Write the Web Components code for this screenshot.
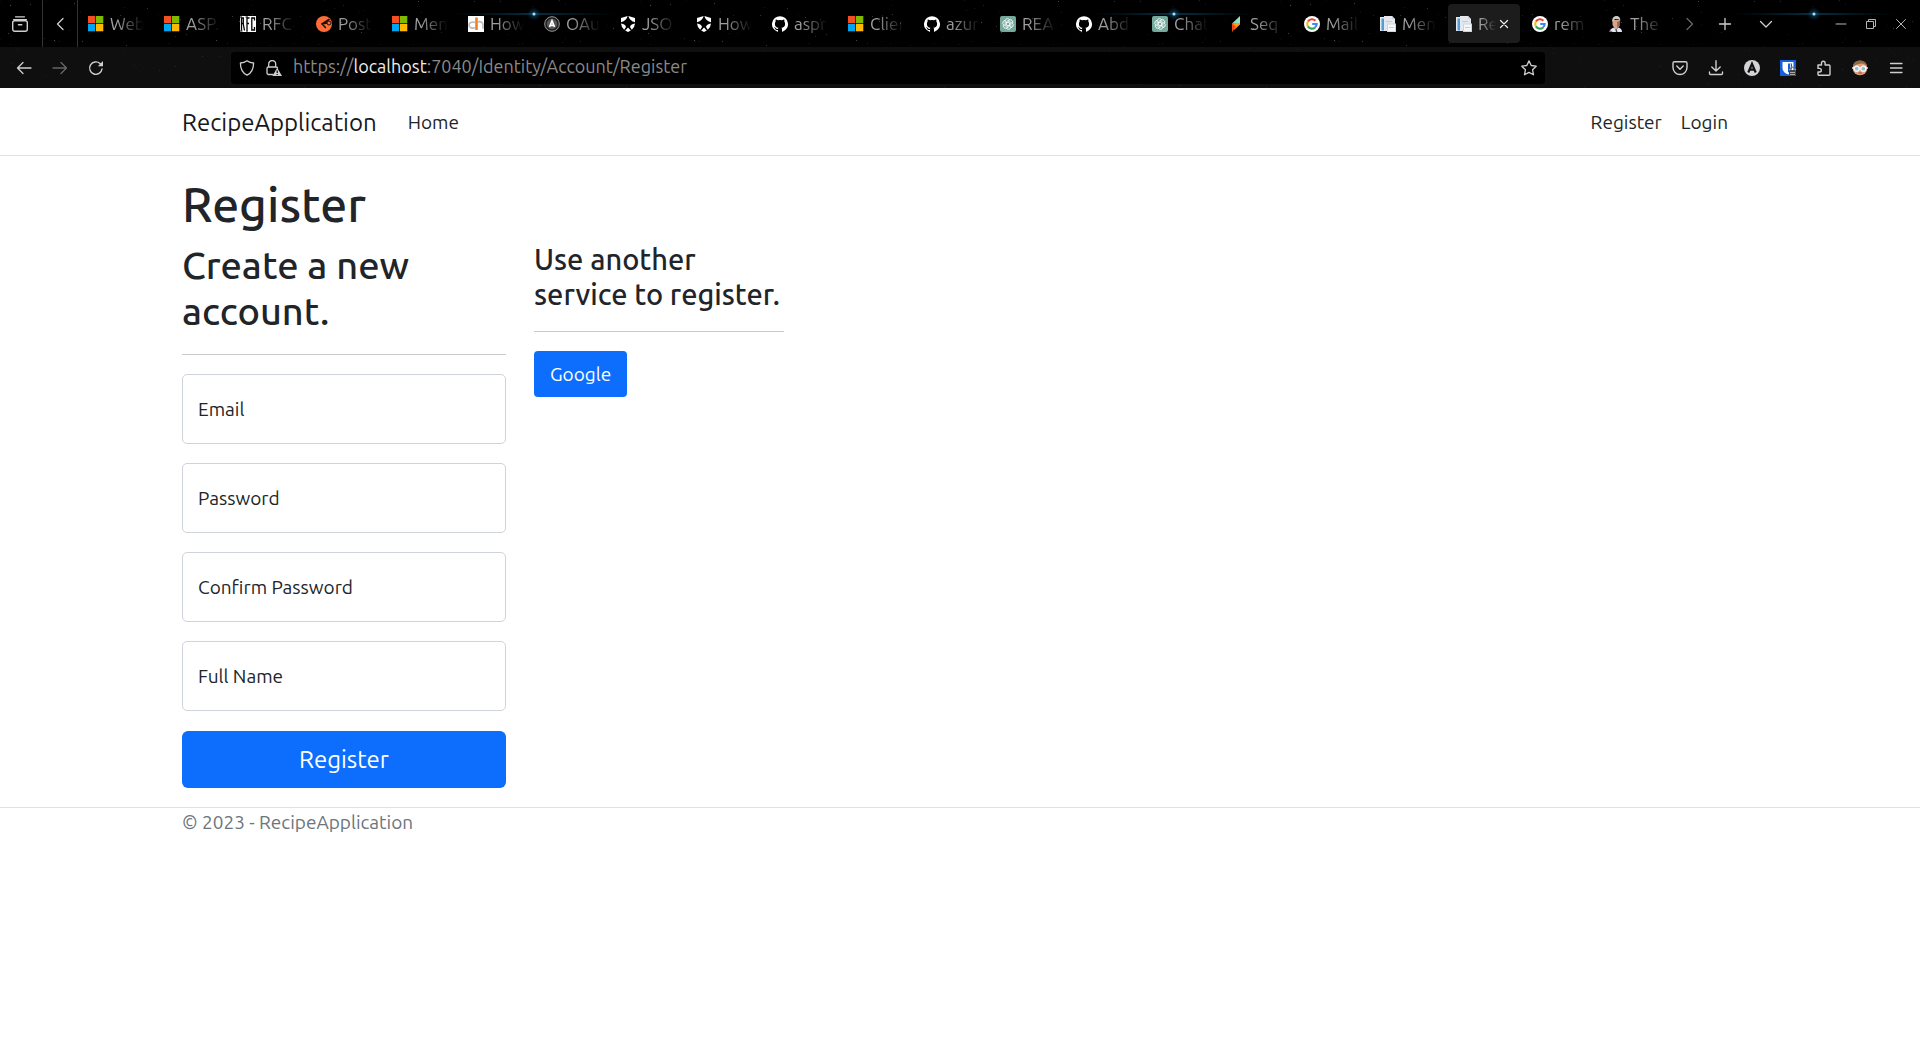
<!DOCTYPE html>
<html lang="en">
<head>
<meta charset="utf-8">
<title>Register - RecipeApplication</title>
<style>
  html, body { margin: 0; min-height: 100%; }
  body { background: #fff; color: #212529; font: 400 19px/29px Ubuntu, "Noto Sans", sans-serif; }
</style>
</head>
<body>
<browser-chrome></browser-chrome>
<site-header></site-header>
<register-page></register-page>
<site-footer>© 2023 - RecipeApplication</site-footer>

<script>
const define = (name, html, setup) => customElements.define(name, class extends HTMLElement {
  connectedCallback() {
    if (this.shadowRoot) return;
    const root = this.attachShadow({ mode: 'open' });
    root.innerHTML = html;
    if (setup) setup(root, this);
  }
});

const line = (d, w = 1.3, extra = '') => `<path d="${d}" fill="none" stroke="currentColor" stroke-width="${w}" stroke-linecap="round" stroke-linejoin="round" ${extra}/>`;

const KNOT = [0, 60, 120, 180, 240, 300].map(a => `<path d="M5.200 4.800a2.400 2.400 0 0 1 4.600-.7M5.200 4.800v3.400l2.800 1.600" transform="rotate(${a} 8 8)"/>`).join('');

const ICONS = {
  // favicons
  microsoft: '<path fill="#f25022" d="M0 0h7.3v7.3H0z"/><path fill="#7fba00" d="M8 0h7.3v7.3H8z"/><path fill="#00a4ef" d="M0 8h7.3v7.3H0z"/><path fill="#ffb900" d="M8 8h7.3v7.3H8z"/>',
  rfc: '<path fill="#fff" d="M0 0h16v16H0z"/><path fill="none" stroke="#000" stroke-width="1.300" d="M1.500 14.500V2h1.800v5.500H1.500M3.200 7.500l1.300 7M7 14.500V2h2.500M7 7.500h2M14.500 4.500V2h-2.700v12h2.700v-3"/><path stroke="#000" d="M0 1h2M0 15h2.500M6 15h2M5.500 1H8"/>',
  postman: '<circle cx="8" cy="8" r="8" fill="#ff6c37"/><path d="M13 3.500 6 8l3.500 3.500M6 8l5-1" fill="none" stroke="#14100e" stroke-width="1.500" stroke-linecap="round"/><circle cx="13" cy="7" r="2" fill="#ff6c37" stroke="#14100e"/>',
  devto: '<path fill="#fff" d="M0 0h16v16H0z"/><path d="M7 6.500C4 5.300 1 6.600 1 9s3 3.800 6 2.700M10 6c2.500-1 5 .2 5 2.800v4" fill="none" stroke="#b9b9b9" stroke-width="1.600"/><path fill="#f48024" d="M7.200 1.500h2.600v12.500H7.200z"/>',
  oauth: '<circle cx="8" cy="8" r="7.300" fill="#1b1b1b" stroke="#999" stroke-width="1"/><circle cx="8" cy="8" r="5.300" fill="#555"/><path d="M5.500 11 8 4.800l2.500 6.200M6.700 9.300h2.600" fill="none" stroke="#fff" stroke-width="1.700"/>',
  auth0: '<path fill="#fff" d="M1 2 7.600 0Q6.800 4.600 1 6.200ZM15 2 8.400 0Q9.200 4.600 15 6.200ZM1 7.600q4.600.8 5 3.400L4.200 13.800Q1.200 11 1 7.600ZM15 7.600q-4.600.8-5 3.400l1.800 2.800Q14.800 11 15 7.600ZM8 11.500l2.800 3L8 16l-2.800-1.500Z"/>',
  github: '<path fill="#fff" d="M8 .2a8 8 0 0 0-2.500 15.600c.4.100.5-.2.5-.4v-1.400c-2.200.5-2.700-1-2.700-1-.4-.9-.9-1.200-.9-1.200-.7-.5.100-.5.100-.5.800.100 1.200.8 1.200.8.7 1.300 1.900.9 2.300.7.100-.5.300-.9.500-1.100-1.800-.2-3.600-.9-3.600-4 0-.9.300-1.600.8-2.100-.1-.2-.4-1 .1-2.100 0 0 .7-.2 2.200.8a7.500 7.500 0 0 1 4 0c1.500-1 2.200-.8 2.200-.8.400 1.100.2 1.900.1 2.100.5.600.8 1.300.8 2.100 0 3.100-1.900 3.800-3.700 4 .3.300.6.800.6 1.500v2.200c0 .2.100.500.5.4A8 8 0 0 0 8 .2Z"/>',
  openai: `<rect width="16" height="16" rx="2" fill="#75a99c"/><g fill="none" stroke="#fff" stroke-width=".8">${KNOT}</g>`,
  seq: '<path fill="#8fe3c1" d="M12 0v8L4 7.500Z"/><path fill="#cf4436" d="M4 7.500 8 8l-4 8Z"/><path fill="#ff9a1f" d="m4 7.500 8-.5v1.500L6 14Z"/><path fill="#f04a12" d="m4 7.500 4 3L4 16Z"/>',
  google: '<circle cx="8" cy="8" r="8" fill="#fff"/><g fill="none" stroke-width="2.100"><path stroke="#ea4335" d="M3.900 5.600A4.700 4.700 0 0 1 11.400 4.700"/><path stroke="#fbbc05" d="M3.900 5.500a4.800 4.800 0 0 0 0 5"/><path stroke="#34a853" d="M3.900 10.400a4.700 4.700 0 0 0 7.200 1"/><path stroke="#4285f4" d="M8.200 8h4.500a4.700 4.700 0 0 1-1.700 3.500"/></g>',
  pages: '<path fill="#e4e7ee" d="M0 1h5v14H0zM4 0h8l3 3v12H4z"/><path fill="#4f9fd6" d="M1.500 2.500h2.500v12H1.500z"/><path fill="#cfd3dc" d="M12 0v3h3zM7 7.500h9V16H7z"/><path fill="#f5f6f9" d="M8 8.500h7V15H8z"/><path stroke="#c5cad4" d="M9 11.500h5M6 5.500h6" stroke-width="1"/>',
  person: '<path fill="#d9a48a" d="M4.500 4h7v6l-2.500 3H7L4.500 9Z"/><path fill="#c9c9c9" d="M4.500 6C3.500 2 6 0 8.500 0S13 2 12 6l-1-2.500L7 3Z"/><path fill="#9c6b55" d="M9 5.500h2.500v4L9 12Z"/><path fill="#dfe7f2" d="M1.500 16c0-2.500 2-3.500 4.500-4.500L8 14l2.500-2.500c2.500 1 3.500 2 3.500 4.500Z"/><path fill="#c24b4b" d="m2 16 .5-2 2 2Z"/><path fill="#30415e" d="m7.500 14 1-.5 1 2.500H8Z"/>',
  // toolbar
  archive: line('M3.500.8h9M1.500 3.600h13') + '<rect x=".7" y="4.700" width="14.600" height="10.600" rx="2" fill="none" stroke="currentColor" stroke-width="1.400"/>' + line('M6.500 8.700h3.200', 1.6),
  left: line('M11 2.500 5.500 8l5.500 5.500'),
  right: line('M5 2.500 10.500 8 5 13.500'),
  down: line('M2.500 5.500 8 11l5.500-5.500'),
  plus: line('M8 2.500v11M2.500 8h11'),
  close: line('M4.500 4.500l7 7M11.500 4.500l-7 7', 1.2),
  min: line('M3 8h10', 1),
  restore: '<path d="M3.500 5.500h7v7h-7zM5.500 5V3.500h7v7H11" fill="none" stroke="currentColor"/>',
  quit: line('M3.500 3.500l9 9M12.500 3.500l-9 9', 1),
  back: line('M15 8H1.500M7 2.500 1.500 8 7 13.500'),
  forward: line('M1 8h13.500M9 2.500 14.500 8 9 13.500'),
  reload: line('M14 9a6.200 6.200 0 1 1-2-5.500l1.500 1.300', 1.4) + '<path fill="currentColor" d="M15 1v5.200H9.800Z"/>',
  shield: line('M8 .8c2 1.500 4.200 2.100 6.600 2.200 0 5.500-2 10-6.600 12.200C3.400 13 1.400 8.500 1.400 3 3.800 2.900 6 2.300 8 .8Z', 1.3),
  lock: line('M7 14.500H2.500a1.500 1.500 0 0 1-1.500-1.500V8.500A1.500 1.500 0 0 1 2.500 7H10a1.500 1.500 0 0 1 1.500 1M2.700 7V4a3.500 3.500 0 0 1 7 0v3', 1.3) + '<path fill="currentColor" d="m11.200 7.800 4.800 8.200H6.400Z"/><path stroke="#000" stroke-width="1.200" d="M11.200 10.500v2.500M11.200 14v1"/>',
  star: line('m8 .9 2.200 4.600 5 .7-3.600 3.600.9 5L8 12.400l-4.500 2.400.9-5L.8 6.200l5-.7Z', 1.3),
  pocket: line('M2.500 1.800h11a1.500 1.500 0 0 1 1.500 1.500V7.500a7 7 0 0 1-14 0V3.300a1.500 1.500 0 0 1 1.500-1.500ZM4.800 6 8 9.200 11.200 6', 1.4),
  download: line('M8 .8v10M3.800 7 8 11l4.200-4M1.500 12v1.500a1 1 0 0 0 1 1h11a1 1 0 0 0 1-1V12', 1.4),
  account: '<circle cx="8" cy="8" r="8" fill="#d4d4d6"/><path d="M4.300 12.500 8 3.800l3.700 8.700M5.700 9.700h4.600" fill="none" stroke="#111" stroke-width="2.200"/>',
  bitwarden: '<path fill="#175ddc" d="M0 0h16v16H0z"/><path fill="#fff" d="M2.500 2h11v6c0 3.500-3 5.500-5.500 6.500C5.500 13.500 2.500 11.500 2.500 8Z"/><path fill="#175ddc" d="M8 3.500h4V8c0 2-1.500 3.500-4 4.500Z"/><path fill="#fff" d="M10 3.500h.8v5H10z"/><path fill="#fff" d="M9 9h7v7H9z" opacity=".5"/><rect x="9" y="10" width="7" height="6" rx="1" fill="#444"/><path d="M10.800 10V8.800a1.700 1.700 0 0 1 3.400 0V10" fill="none" stroke="#777" stroke-width="1.200"/><path stroke="#aaa" d="M10 12.500h5M10 14.500h5"/>',
  puzzle: line('M2 5h3.500V3a1.800 1.800 0 0 1 3.600 0v2H13a1 1 0 0 1 1 1v8.200a1 1 0 0 1-1 1H3a1 1 0 0 1-1-1V12h1.500a1.800 1.800 0 0 0 0-3.600H2Z', 1.4),
  avatar: '<circle cx="8" cy="8" r="7.300" fill="#dfa27c"/><path fill="#8f6a45" d="M1 6.500C1 2.800 4 .5 8 .5s7 2.300 7 6c-1.500-2-3.500-3-5-3-3 0-6 1-9 3Z"/><path stroke="#fff" stroke-width="1.200" d="M0 8h16"/><circle cx="4.700" cy="8.700" r="2.500" fill="#8dc4d1" stroke="#fff" stroke-width="1.200"/><circle cx="11.300" cy="8.700" r="2.500" fill="#8dc4d1" stroke="#fff" stroke-width="1.200"/><path stroke="#a03d2d" d="M6.500 13h3.200"/>',
  menu: line('M2.500 3.500h11.500M2.500 8h11.500M2.500 12.500h11.500', 1.3)
};

customElements.define('ui-icon', class extends HTMLElement {
  connectedCallback() {
    if (this.shadowRoot) return;
    this.attachShadow({ mode: 'open' }).innerHTML =
      `<style>:host{display:block;width:16px;height:16px;flex:none}svg{display:block;width:100%;height:100%}</style>
       <svg viewBox="0 0 16 16" aria-hidden="true">${ICONS[this.getAttribute('name')]}</svg>`;
  }
});

// Night-sky theme behind the toolbars: one 640px tile, repeated.
define('star-field', `
  <style>:host{display:block;position:absolute;inset:0;overflow:hidden;pointer-events:none}svg{display:block;width:100%;height:100%}</style>
  <svg aria-hidden="true"><defs>
    <linearGradient id="ray"><stop offset="0" stop-color="#0b4a6b" stop-opacity="0"/><stop offset=".5" stop-color="#0d5f88" stop-opacity=".5"/><stop offset="1" stop-color="#0b4a6b" stop-opacity="0"/></linearGradient>
    <radialGradient id="glow"><stop offset="0" stop-color="#1d7fae" stop-opacity=".6"/><stop offset="1" stop-color="#0b4a6b" stop-opacity="0"/></radialGradient>
    <pattern id="sky" width="640" height="88" patternUnits="userSpaceOnUse"></pattern></defs>
    <rect width="100%" height="100%" fill="url(#sky)"/></svg>`,
  root => {
    let seed = 11, dots = '';
    const rnd = () => (seed = (seed * 16807) % 2147483647) / 2147483647;
    for (let i = 0; i < 170; i++) {
      const x = Math.floor(rnd() * 640), y = Math.floor(rnd() * 88), o = Math.pow(rnd(), 3) * 0.45 + 0.08;
      dots += `<path fill="${i % 17 ? '#9aa0a8' : '#b07060'}" fill-opacity="${(y > 46 ? o / 3 : o).toFixed(2)}" d="M${x} ${y}h1v1h-1z"/>`;
    }
    dots += '<path fill="url(#ray)" d="M454 13h160v2H454z"/><circle cx="534" cy="14" r="7" fill="url(#glow)"/><circle cx="534" cy="14" r="1.500" fill="#a6dcf5"/>';
    root.getElementById('sky').innerHTML = dots;
  });

define('browser-tab', `
  <style>
    :host{display:block;flex:none;width:76px}
    .tab{box-sizing:border-box;display:flex;align-items:center;width:72px;height:39px;padding-left:8px;border-radius:4px;color:#a0a0a0}
    :host([selected]) .tab{background:#1c1c1c}
    .title{flex:none;width:34px;margin-left:6px;overflow:hidden;white-space:nowrap;font-size:17px;line-height:24px;
      -webkit-mask-image:linear-gradient(90deg,#000 20%,transparent);mask-image:linear-gradient(90deg,#000 20%,transparent)}
    :host([selected]) .title{width:18px}
    button{display:none;padding:0;border:0;background:none;color:#f0f0f0}
    :host([selected]) button{display:block}
  </style>
  <div class="tab" role="tab"><ui-icon></ui-icon><span class="title"><slot></slot></span>
  <button aria-label="Close tab"><ui-icon name="close"></ui-icon></button></div>`,
  (root, host) => root.querySelector('ui-icon').replaceWith(Object.assign(document.createElement('template'),
    { innerHTML: `<ui-icon name="${host.getAttribute('icon')}"></ui-icon>` }).content));

const TABS = [['microsoft', 'Web'], ['microsoft', 'ASP.'], ['rfc', 'RFC'], ['postman', 'Post'], ['microsoft', 'Men'], ['devto', 'How'],
  ['oauth', 'OAu'], ['auth0', 'JSO'], ['auth0', 'How'], ['github', 'aspr'], ['microsoft', 'Clien'], ['github', 'azur'], ['openai', 'REA'],
  ['github', 'Abd'], ['openai', 'Chat'], ['seq', 'Seq'], ['google', 'Mail'], ['pages', 'Men'], ['pages', 'Re', 1], ['google', 'rem'], ['person', 'The']];

define('browser-chrome', `
  <style>
    :host{display:block;position:relative;background:#000;color:#cfcfcf}
    .bar{position:relative;display:flex;align-items:center}
    .tabs{height:47px}
    .nav{height:41px;background:rgba(255,255,255,.06)}
    button{display:grid;place-items:center;flex:none;padding:0;border:0;background:none;color:inherit}
    .dim{color:#666}
    .archive{box-sizing:border-box;width:43px;height:47px;padding-right:2px;border-right:1px solid #333}
    .prev{box-sizing:border-box;width:35px;height:47px;border-right:1px solid #333}
    .strip{display:flex;flex:none;padding-left:2px}
    .next{width:28px}
    .add,.list{width:41px}
    .window{display:flex;margin-left:auto;padding-right:4px;color:#b5b5b5}
    .window button{width:30px}
    .history{display:flex;flex:none;width:231px;padding-left:6px;box-sizing:border-box}
    .history button{width:36px}
    .url{display:flex;align-items:center;flex:1;height:32px;padding:0 8px;gap:11px;border-radius:4px;background:#000}
    .field{flex:1;height:28px;font-size:18px;line-height:24px}
    a{color:#8a8a8a;text-decoration:none}
    b{font-weight:400;color:#ededed}
    .tools{display:flex;flex:none;margin-left:117px;padding-right:6px}
    .tools button{width:36px}
  </style>
  <star-field></star-field>
  <div class="bar tabs">
    <button class="archive" aria-label="Recent browsing"><ui-icon name="archive"></ui-icon></button>
    <button class="prev" aria-label="Scroll tabs left"><ui-icon name="left"></ui-icon></button>
    <div class="strip" role="tablist">${TABS.map(([i, t, s]) => `<browser-tab icon="${i}"${s ? ' selected' : ''}>${t}</browser-tab>`).join('')}</div>
    <button class="next dim" aria-label="Scroll tabs right"><ui-icon name="right"></ui-icon></button>
    <button class="add" aria-label="New tab"><ui-icon name="plus"></ui-icon></button>
    <button class="list" aria-label="List all tabs"><ui-icon name="down"></ui-icon></button>
    <div class="window">
      <button aria-label="Minimize"><ui-icon name="min"></ui-icon></button>
      <button aria-label="Restore"><ui-icon name="restore"></ui-icon></button>
      <button aria-label="Close window"><ui-icon name="quit"></ui-icon></button>
    </div>
  </div>
  <div class="bar nav">
    <div class="history">
      <button aria-label="Back"><ui-icon name="back"></ui-icon></button>
      <button class="dim" aria-label="Forward"><ui-icon name="forward"></ui-icon></button>
      <button aria-label="Reload"><ui-icon name="reload"></ui-icon></button>
    </div>
    <div class="url">
      <ui-icon name="shield"></ui-icon><ui-icon name="lock"></ui-icon>
      <div class="field"><a href="#">https://<b>localhost</b>:7040/Identity/Account/Register</a></div>
      <button aria-label="Bookmark this page"><ui-icon name="star"></ui-icon></button>
    </div>
    <div class="tools">
      ${[['pocket', 'Pocket'], ['download', 'Downloads'], ['account', 'Account'], ['bitwarden', 'Passwords'], ['puzzle', 'Extensions'], ['avatar', 'Profile'], ['menu', 'Menu']]
        .map(([i, l]) => `<button aria-label="${l}"><ui-icon name="${i}"></ui-icon></button>`).join('')}
    </div>
  </div>`);

define('page-container', `
  <style>:host{display:block;box-sizing:border-box;width:100%;max-width:1584px;margin:0 auto;padding:0 14px}</style><slot></slot>`);

define('site-header', `
  <style>
    :host{display:block;border-bottom:1px solid #dee2e6}
    nav{box-sizing:border-box;display:flex;align-items:center;height:67px;padding-top:2px;gap:19px}
    a{color:#212529;text-decoration:none}
    .brand{font-size:24px;line-height:36px;color:#16181b;margin-right:12px}
    .account{display:flex;gap:19px;margin-left:auto;padding-right:10px}
  </style>
  <page-container><nav>
    <a class="brand" href="#">RecipeApplication</a>
    <a href="#">Home</a>
    <div class="account"><a href="#">Register</a><a href="#">Login</a></div>
  </nav></page-container>`);

define('floating-field', `
  <style>
    :host{display:grid}
    input,label{grid-area:1/1}
    input{box-sizing:border-box;width:100%;height:70px;padding:29px 15px 10px;border:1px solid #ced4da;border-radius:5px;background:#fff;color:#212529;font:inherit}
    label{align-self:center;padding:1px 0 0 16px;pointer-events:none}
  </style>
  <input id="field"><label for="field"></label>`,
  (root, host) => {
    root.querySelector('label').textContent = host.getAttribute('label');
    root.querySelector('input').type = host.getAttribute('type') || 'text';
  });

define('primary-button', `
  <style>
    :host{display:block}
    button{display:block;padding:8px 16px;border:0;border-radius:4px;background:#0d6efd;color:#fff;font:inherit;line-height:30px}
    :host([large]) button{width:100%;padding:10px 20px;border-radius:6px;font-size:24px;line-height:37px}
  </style>
  <button><slot></slot></button>`);

define('register-page', `
  <style>
    :host{display:block;padding:19px 0}
    h1,h2,h3{margin:0;font-weight:560}
    h1{font-size:48px;line-height:58px;margin-bottom:9px}
    h2{font-size:38px;line-height:46px}
    h3{font-size:29px;line-height:35px}
    hr{height:1px;margin:19px 0;border:0;background:#c8c9ca}
    h2 + hr{margin-top:20px}
    .row{display:grid;grid-template-columns:324fr 250fr 926fr;gap:28px;align-items:start}
    form{display:grid;gap:19px}
    floating-field + primary-button{margin-top:1px}
  </style>
  <page-container>
    <h1>Register</h1>
    <div class="row">
      <section>
        <h2>Create a new account.</h2><hr>
        <form>
          <floating-field label="Email" type="email"></floating-field>
          <floating-field label="Password" type="password"></floating-field>
          <floating-field label="Confirm Password" type="password"></floating-field>
          <floating-field label="Full Name"></floating-field>
          <primary-button large>Register</primary-button>
        </form>
      </section>
      <section>
        <h3>Use another service to register.</h3><hr>
        <primary-button>Google</primary-button>
      </section>
    </div>
  </page-container>`);

define('site-footer', `
  <style>:host{display:block;border-top:1px solid #dee2e6;color:#6c757d}</style>
  <page-container><slot></slot></page-container>`);
</script>
</body>
</html>
